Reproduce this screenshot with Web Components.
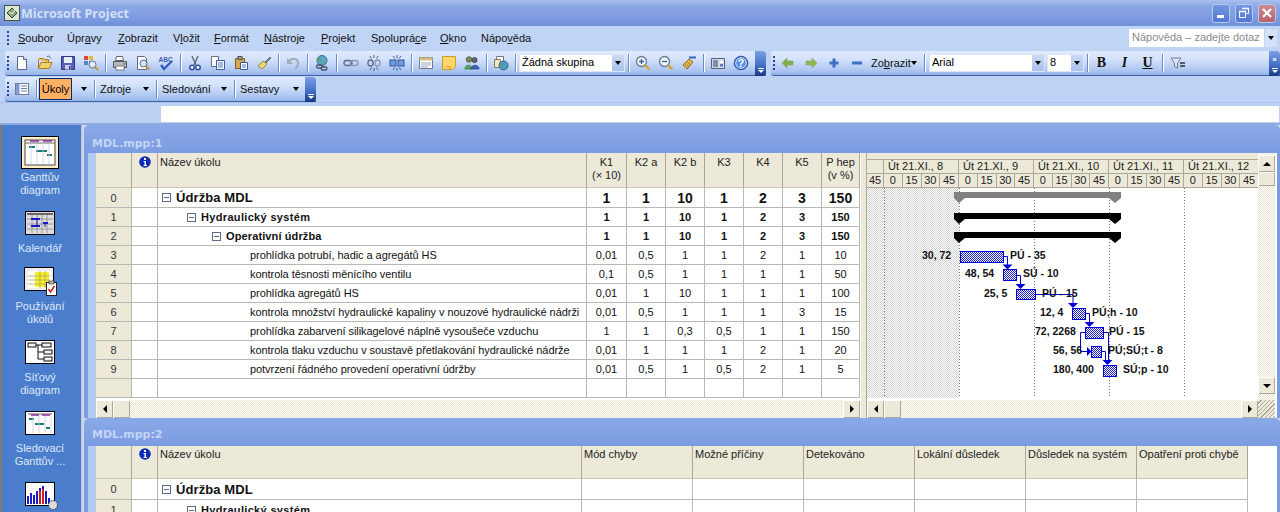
<!doctype html>
<html lang="cs">
<head>
<meta charset="utf-8">
<title>Microsoft Project</title>
<style>
  html, body { margin: 0; height: 100%; overflow: hidden; background: #c0d5f6; }
  body { font: 11px "Liberation Sans", Arial, sans-serif; color: #000; }
  ms-app { width: 1280px; height: 512px; }
</style>
</head>
<body>
<ms-app></ms-app>
<script>
(function () {
  const DITHER_BLUE = `<pattern id="d" width="2" height="2" patternUnits="userSpaceOnUse"><rect width="2" height="2" fill="#fff"/><rect width="1" height="1" fill="#1a1ad0"/><rect x="1" y="1" width="1" height="1" fill="#1a1ad0"/></pattern>`;

  const ICONS = {
    new: `<path d="M3.5 1.5h6l3 3v10h-9z" fill="#fff" stroke="#59688a"/><path d="M9.5 1.5v3h3" fill="#dfe6f2" stroke="#59688a"/>`,
    open: `<path d="M1.5 4.5v9h11l2.500-6h-11l-2 5" fill="#f2cf6d" stroke="#a97f22"/><path d="M1.500 4.500l1-1h4l1 1h4v3" fill="#e8b84a" stroke="#a97f22"/><path d="M10 1.500c2-1 3 0 4 2" fill="none" stroke="#3a62b5"/>`,
    save: `<path d="M1.500 1.500h13v13h-13z" fill="#5560bb" stroke="#2e3580"/><rect x="4" y="2" width="8" height="6" fill="#e9edf8"/><rect x="5" y="10" width="6" height="4.500" fill="#c8cde0"/><rect x="9" y="11" width="1.500" height="3" fill="#2e3580"/>`,
    perm: `<rect x="1" y="1" width="4" height="4" fill="#d84c3c"/><rect x="6" y="1" width="4" height="4" fill="#e2b73a"/><rect x="1" y="6" width="4" height="4" fill="#4a8ad0"/><rect x="6" y="6" width="4" height="4" fill="#5aa85a"/><circle cx="9.500" cy="9.500" r="3.500" fill="#dfeefa" stroke="#66708a"/><path d="M12 12l3 3" stroke="#c9952f" stroke-width="2"/>`,
    print: `<path d="M4.500 1.500h6l1 4h-8z" fill="#fff" stroke="#666"/><path d="M1.500 6.500h13v6h-13z" fill="#b7bcc4" stroke="#555"/><rect x="4" y="11" width="8" height="4" fill="#fff" stroke="#666" stroke-width=".8"/><rect x="11" y="8" width="2.500" height="1.500" fill="#3fae4e"/>`,
    preview: `<path d="M2.500 1.500h7l2 2v11h-9z" fill="#fff" stroke="#59688a"/><circle cx="8.500" cy="8.500" r="3.500" fill="#cfe5f6" stroke="#5b6a88"/><path d="M11 11l3.500 3.500" stroke="#c9952f" stroke-width="2"/>`,
    spell: `<text x="0.500" y="6.500" font-family="Liberation Sans" font-size="6.500" font-weight="700" fill="#3c5ea8">ABC</text><path d="M3 10l3 4 8-8" fill="none" stroke="#2d5fbd" stroke-width="2.400"/>`,
    cut: `<path d="M5 1l4 9M11 1l-4 9" stroke="#5a6470" stroke-width="1.300"/><circle cx="5" cy="12.500" r="2.200" fill="#fff" stroke="#2d4f9e" stroke-width="1.500"/><circle cx="11" cy="12.500" r="2.200" fill="#fff" stroke="#2d4f9e" stroke-width="1.500"/>`,
    copy: `<path d="M1.500 1.500h7v10h-7z" fill="#fff" stroke="#63708f"/><path d="M6.500 5.500h8v9h-8z" fill="#f5f8fe" stroke="#3c5ea8"/><path d="M8 8h5M8 10h5M8 12h5" stroke="#5a7cc0"/>`,
    paste: `<path d="M2.500 3.500h9v10h-9z" fill="#d5a84c" stroke="#80601e"/><rect x="5" y="1.500" width="4" height="3" fill="#9aa3b3" stroke="#555"/><path d="M7.500 7.500h7v7h-7z" fill="#fff" stroke="#3c5ea8"/><path d="M9 10h4M9 12h4" stroke="#5a7cc0"/>`,
    brush: `<path d="M9 7l5-5 1 1-5 5z" fill="#6d7890" stroke="#4b5468" stroke-width=".6"/><path d="M2 11l5-5 4 3-5 5z" fill="#ecd27b" stroke="#a58a3a"/>`,
    undo: `<path d="M4 6c3-3 8-3 9 1 .6 3-1 5-3 7" fill="none" stroke="#a4abba" stroke-width="2"/><path d="M2 3v6h6z" fill="#a4abba"/>`,
    globe: `<circle cx="8" cy="5.500" r="5" fill="#5aa6d0" stroke="#3a6a9a"/><path d="M5 2c2 1 3 2 2 4-2 1-3 0-4-1M9 6c2 0 3 1 2 2l-2 1z" fill="#5da35a"/><rect x="2.500" y="10" width="6" height="3" rx="1.500" fill="none" stroke="#4b5468" stroke-width="1.300"/><rect x="7" y="12" width="6" height="3" rx="1.500" fill="none" stroke="#4b5468" stroke-width="1.300"/>`,
    link: `<rect x="1" y="5.500" width="8" height="5" rx="2.500" fill="none" stroke="#5a6a8a" stroke-width="1.400"/><rect x="7" y="5.500" width="8" height="5" rx="2.500" fill="none" stroke="#8a97ad" stroke-width="1.400"/>`,
    unlink: `<rect x="2" y="5" width="5" height="6" rx="2.500" fill="none" stroke="#5a6a8a" stroke-width="1.300"/><rect x="9" y="5" width="5" height="6" rx="2.500" fill="none" stroke="#8a97ad" stroke-width="1.300"/><path d="M8 0v3M8 13v3M4 1l1.500 2.500M12 1l-1.500 2.500M4 15l1.500-2.500M12 15l-1.500-2.500" stroke="#4b5468" stroke-width=".9"/>`,
    split: `<rect x="1" y="5" width="6" height="6" fill="#6f9fe0" stroke="#2d4f9e"/><rect x="9" y="5" width="6" height="6" fill="#6f9fe0" stroke="#2d4f9e"/><path d="M8 0v3M8 13v3M4 1l2 2.500M12 1l-2 2.500M4 15l2-2.500M12 15l-2-2.500" stroke="#2d4f9e" stroke-width=".9"/>`,
    notes: `<path d="M1.500 2.500h13v11h-13z" fill="#fff" stroke="#6a7890"/><path d="M1.500 2.500h13v3h-13z" fill="#d8c080"/><path d="M3 8h10M3 10h10M3 12h7" stroke="#9aa6ba"/>`,
    note: `<path d="M1.500 1.500h13v10l-3 3h-10z" fill="#fbd669" stroke="#c99c2f"/><path d="M1.500 11h9v3.500" fill="#f1a93c" opacity=".7"/>`,
    res: `<circle cx="5" cy="4.500" r="2.800" fill="#7a8a5a" stroke="#3d4a30" stroke-width=".7"/><circle cx="10.500" cy="5" r="2.600" fill="#5e6672" stroke="#333" stroke-width=".7"/><path d="M1 14c0-5 7-5 7 0z" fill="#5aa85a" stroke="#2f6e33" stroke-width=".7"/><path d="M7 14c0-5 8-5 8 0z" fill="#3a62c0" stroke="#24407e" stroke-width=".7"/>`,
    assign: `<path d="M3.500 1.500h7v9h-7z" fill="#fff" stroke="#6a7890"/><path d="M1.500 4.500h6v8h-6z" fill="#f3e5c0" stroke="#8a7a50"/><circle cx="10.500" cy="10.500" r="4.500" fill="#4f9ac8" stroke="#2d6690"/><path d="M8 8c2 0 3 1 2 3l-2 0zM12 12l2-1-1 3z" fill="#4ea24f"/>`,
    zoomin: `<circle cx="6.500" cy="6.500" r="5" fill="#eef5fc" stroke="#6a7890" stroke-width="1.300"/><path d="M4 6.500h5M6.500 4v5" stroke="#3c5ea8" stroke-width="1.300"/><path d="M10 10l4.500 4.500" stroke="#d2a53a" stroke-width="2.400"/>`,
    zoomout: `<circle cx="6.500" cy="6.500" r="5" fill="#eef5fc" stroke="#6a7890" stroke-width="1.300"/><path d="M4 6.500h5" stroke="#3c5ea8" stroke-width="1.300"/><path d="M10 10l4.500 4.500" stroke="#d2a53a" stroke-width="2.400"/>`,
    goto: `<path d="M8 2.500h7" stroke="#3a62c0" stroke-width="2"/><path d="M2 10l6-6 4 3-6 7z" fill="#e2b951" stroke="#8f6e22"/><path d="M4 9l4 3M6 7l4 3" stroke="#8f6e22" stroke-width=".7"/>`,
    photo: `<path d="M1.500 3.500h13v10h-13z" fill="#d5dbe6" stroke="#55617a"/><rect x="3" y="5" width="5" height="7" fill="#7f8ca8"/><rect x="10" y="6" width="3" height="2" fill="#fff"/><rect x="10" y="9" width="3" height="2.500" fill="#5a7cc0"/>`,
    help: `<circle cx="8" cy="8" r="6.800" fill="#3f74d2" stroke="#2d4f9e"/><circle cx="8" cy="8" r="5.300" fill="#5a8fe4" stroke="#dfe9fb"/><text x="8" y="11.800" text-anchor="middle" font-family="Liberation Sans" font-size="10.500" font-weight="700" fill="#fff">?</text>`,
    back: `<path d="M2 8l5-5v3h6v4H7v3z" fill="#7fb04c" stroke="#8f9f6a" stroke-width=".6"/>`,
    fwd: `<path d="M14 8L9 3v3H3v4h6v3z" fill="#8cbb52" stroke="#8f9f6a" stroke-width=".6"/>`,
    plus: `<path d="M6.500 3.500h3v3h3v3h-3v3h-3v-3h-3v-3h3z" fill="#3d6fc9"/>`,
    minus: `<rect x="3" y="6.500" width="10" height="3" fill="#3d6fc9"/>`,
    filter: `<path d="M1 3h10L7.500 8v5l-3-1.500V8z" fill="#dfe5ee" stroke="#717d92"/><path d="M10 8h5M10 11h5" stroke="#333" stroke-width="1.600"/>`,
    list: `<rect x="1.500" y="2.500" width="13" height="11" fill="#fff" stroke="#6a7b9c"/><rect x="2" y="3" width="3.500" height="10" fill="#7f9cd4"/><path d="M7 5h6M7 7.500h6M7 10h6" stroke="#6a7b9c"/>`,
    appicon: `<rect x=".5" y=".5" width="15" height="15" fill="#dfe6d8" stroke="#3e5a44"/><path d="M3 8l5-5 5 5-5 5z" fill="#8aa874" stroke="#2f4a30"/><path d="M5 7l3 2 3-4" stroke="#fff" fill="none"/>`
  };

  const BIG = {
    gantt: `<rect x=".5" y=".5" width="37" height="32" fill="#ffefc4" stroke="#000"/><rect x="4" y="4" width="30" height="25" fill="#fff" stroke="#445"/><path d="M4 7h30" stroke="#666"/><path d="M9 5h9M22 5h9" stroke="#8a2a9a" stroke-width="1.500"/><path d="M8 11h6M15 15h11M26 19h5" stroke="#197a78" stroke-width="2"/><path d="M10 8v20M16 8v20M22 8v20M28 8v20" stroke="#ccd" stroke-width=".8"/>`,
    calendar: `<rect x=".5" y=".5" width="29" height="23" fill="#dcdcdc" stroke="#000"/><path d="M2 3h26" stroke="#666" stroke-width="2"/><path d="M7 4v18M12 4v18M17 4v18M22 4v18M2 8h26M2 13h26M2 18h26" stroke="#8a8a8a" stroke-width=".8"/><path d="M6 8h9M6 15h9M18 12h5" stroke="#1a1ac8" stroke-width="2"/><path d="M12 9v6M20 12v4" stroke="#1a1ac8"/>`,
    usage: `<rect x=".5" y=".5" width="29" height="23" fill="#eee" stroke="#000"/><rect x="4" y="4" width="23" height="17" fill="#fff"/><rect x="11" y="5" width="14" height="15" fill="#f4f02c"/><path d="M11 9h15M11 13h15M11 17h15M16 4v17M21 4v17M4 9h7M4 13h7M4 17h7" stroke="#b5a25a" stroke-width=".8"/><rect x="22.500" y="15.500" width="10" height="13" fill="#fff" stroke="#222"/><rect x="25" y="14" width="5" height="3" fill="#bbb" stroke="#222" stroke-width=".6"/><path d="M24.500 22l2 3 4-6" fill="none" stroke="#c02020" stroke-width="1.500"/>`,
    network: `<rect x=".5" y=".5" width="29" height="23" fill="#fff" stroke="#000"/><g fill="#f2f2f2" stroke="#111"><rect x="3" y="3" width="8" height="4"/><rect x="17" y="3" width="9" height="4"/><rect x="19" y="10" width="8" height="4"/><rect x="19" y="17" width="8" height="4"/></g><path d="M11 5h6M13 5v14h6M13 12h6" fill="none" stroke="#111"/>`,
    tracking: `<rect x=".5" y=".5" width="29" height="23" fill="#fff" stroke="#000"/><path d="M3 3h24" stroke="#666"/><path d="M6 4h8M17 4h8" stroke="#8a2a9a" stroke-width="1.500"/><path d="M4 8h5M10 13h9M21 17h4" stroke="#197a78" stroke-width="2"/><path d="M8 5v17M14 5v17M20 5v17M26 5v17" stroke="#ccd" stroke-width=".8"/>`,
    chart: `<rect x=".5" y=".5" width="29" height="23" fill="#fff" stroke="#000"/><path d="M3 22v-8M6 22v-11M9 22v-9M12 22v-13M15 22V6M18 22V4M21 22V9M24 22v-6M27 22v-3" stroke-width="2" stroke="#1a1ac8"/><path d="M15 22V9M18 22V7" stroke="#d02020" stroke-width="2"/><circle cx="28" cy="23" r="4.500" fill="#ddd" stroke="#333" stroke-dasharray="2 1"/>`
  };

  function define(name, css, render) {
    customElements.define(name, class extends HTMLElement {
      connectedCallback() {
        if (this.shadowRoot) return;
        this.attachShadow({ mode: "open" }).innerHTML = `<style>${css}</style>${render(this)}`;
      }
    });
  }

  const GRIP = `background: repeating-linear-gradient(#23478f 0 2px, transparent 2px 4px);`;
  const ARROW = `border-left: 3.5px solid transparent; border-right: 3.5px solid transparent; border-top: 4px solid #000;`;
  const BEVEL = `background: #ece9d8; box-shadow: inset 1px 1px 0 #fff, inset -1px -1px 0 #aca899; box-sizing: border-box;`;
  const DITHER = `background: repeating-conic-gradient(#ebe7d6 0 25%, #fdfdf8 0 50%) 0 0 / 2px 2px;`;

  define("ms-titlebar", `
    :host { display: flex; align-items: center; height: 26px; box-sizing: border-box; padding: 0 4px;
      background: linear-gradient(#a9c0ef 0, #8aa6e4 25%, #7d9be0 70%, #6f90d8 100%); }
    svg { width: 16px; height: 16px; }
    span { margin-left: 1px; font: 700 12.5px "Open Sans", sans-serif; color: #d4e0f8; flex: 1; letter-spacing: .05px; }
    i { width: 18px; height: 19px; margin-left: 5px; border-radius: 3px; background: linear-gradient(#7497e2, #4f78d4);
        border: 1px solid #b9caef; box-sizing: border-box; display: flex; align-items: center; justify-content: center; }
    i.close { background: linear-gradient(#cc8a92, #b9636e); }
    i svg { width: 12px; height: 12px; }
  `, () => `<svg viewBox="0 0 16 16">${ICONS.appicon}</svg><span>Microsoft Project</span>
    <i><svg viewBox="0 0 12 12"><rect x="2" y="8" width="7" height="3" fill="#fff"/></svg></i>
    <i><svg viewBox="0 0 12 12"><path d="M4.500 1.500h6v5h-2M1.500 4.500h6v6h-6z" fill="none" stroke="#fff"/><path d="M4 1.500h7M1 4.500h7" stroke="#fff" stroke-width="1.500"/></svg></i>
    <i class="close"><svg viewBox="0 0 12 12"><path d="M2 2l8 8M10 2l-8 8" stroke="#fff" stroke-width="2.200"/></svg></i>`);

  define("ms-menubar", `
    :host { display: flex; align-items: center; height: 24px; box-sizing: border-box; padding: 0 3px 0 7px; background: #c0d5f6; }
    .grip { width: 2px; height: 14px; margin-right: 9px; ${GRIP} }
    .items { display: flex; flex: 1; }
    ::slotted(*) { display: block; }
    .ask { display: flex; width: 148px; height: 18px; margin-top: 0; }
    .ask span { flex: 1; background: #fff; color: #8b8b8b; padding: 0 0 0 3px; font: 11px/17px "Liberation Sans", sans-serif; }
    .ask b { width: 12px; margin-left: 1px; background: #d4e1f8; display: flex; align-items: center; justify-content: center; }
    .ask b::after { content: ""; ${ARROW} }
  `, () => `<div class="grip"></div><div class="items"><slot></slot></div><div class="ask"><span>Nápověda – zadejte dotaz</span><b></b></div>`);

  define("menu-item", `:host { display: block; font-size: 11px; line-height: 15px; color: #111; white-space: nowrap; }
    ::slotted(u) { text-decoration: underline; }`,
    el => `<div style="width:${el.getAttribute("w")}px"><slot></slot></div>`);

  define("ms-toolbar", `
    :host { display: flex; align-items: center; height: 25px; box-sizing: border-box; border-radius: 3px 0 0 3px; padding-left: 2px;
      border-bottom: 1px solid #3c61a4; background: linear-gradient(#e0ebfd 0, #d3e1fa 35%, #a9c3f0 85%, #94b2e8 100%); position: relative; }
    .grip { width: 2px; height: 14px; margin-right: 1px; ${GRIP} }
  `, () => `<div class="grip"></div><slot></slot>`);

  define("tb-btn", `:host { display: flex; width: 23px; height: 22px; align-items: center; justify-content: center; flex: none; }
    svg { width: 16px; height: 16px; display: block; }`,
    el => `<svg viewBox="0 0 16 16">${ICONS[el.getAttribute("icon")]}</svg>`);

  define("tb-sep", `:host { display: flex; justify-content: center; width: 6px; height: 18px; flex: none; }
    div { width: 1px; background: #6d8cc6; box-shadow: 1px 0 0 #fff; }`, () => `<div></div>`);

  define("tb-combo", `
    :host { display: flex; height: 18px; flex: none; background: #fff; box-sizing: border-box; border: 1px solid #dbe6fa; }
    span { flex: 1; padding-left: 2px; font-size: 11px; line-height: 15px; white-space: nowrap; overflow: hidden; }
    b { width: 12px; background: linear-gradient(#c9d9f5, #a9c1ea); display: flex; align-items: center; justify-content: center; }
    b::after { content: ""; ${ARROW} }
  `, el => `<span><slot></slot></span><b></b>`);

  define("tb-menu", `
    :host { display: flex; align-items: center; height: 22px; box-sizing: border-box; padding-left: 3px; flex: none; font-size: 11px; white-space: nowrap; color: #111; }
    span { flex: 1; }
    i { ${ARROW} margin-right: var(--arrow-gap, 4px); }
  `, () => `<span><slot></slot></span><i></i>`);

  define("tb-style", `:host { display: flex; width: 23px; justify-content: center; flex: none; font: 700 14px "Liberation Serif", serif; color: #111; }`, () => `<slot></slot>`);

  define("tb-active", `:host { display: flex; align-items: center; justify-content: center; flex: none; width: 33px; height: 22px; box-sizing: border-box;
      border: 1px solid #0a2a70; background: #ffb163; font-size: 11px; }`, () => `<slot></slot>`);

  define("tb-chevron", `
    :host { display: flex; flex-direction: column; align-items: center; justify-content: flex-end; gap: 1px; width: 11px; height: 25px; flex: none; box-sizing: border-box; padding-bottom: 3px;
      background: linear-gradient(#7c9fe4 0, #4571c8 55%, #17387f 100%); border-radius: 0 3px 3px 0; margin-bottom: -1px; }
    .more { font: 700 8px/5px "Liberation Sans", sans-serif; color: #fff; }
    i { width: 6px; height: 1px; background: #fff; }
    u { border-left: 3px solid transparent; border-right: 3px solid transparent; border-top: 3px solid #fff; }
  `, el => `${el.hasAttribute("more") ? `<div class="more" style="margin-bottom:5px">»</div>` : ""}<i></i><u></u>`);

  define("ms-entrybar", `
    :host { display: block; height: 23px; box-sizing: border-box; padding: 3px 1px 3px 161px; background: #bcd1f4;
      border-top: 1px solid #aac1ec; border-bottom: 2px solid #90a9dd; }
    div { height: 16px; background: #fff; }
  `, () => `<div></div>`);

  define("side-bar", `
    :host { display: flex; flex-direction: column; gap: 9px; width: 82px; box-sizing: border-box; padding: 10px 0 0 0; flex: none; overflow: hidden;
      background: #4a7dcc; border-left: 2px solid #7b7b78; border-right: 1px solid #bcc6da; }
  `, () => `<slot></slot>`);

  define("side-item", `
    :host { display: block; text-align: center; width: 76px; flex: none; font: 11px/13px "Liberation Sans", sans-serif; color: #dde8fa; }
    .ico { height: 34px; display: flex; align-items: center; justify-content: center; margin-bottom: 2px; }
    svg { display: block; overflow: visible; }
  `, el => {
    const w = +el.getAttribute("w"), h = +el.getAttribute("h");
    return `<div class="ico"><svg width="${w}" height="${h}" viewBox="0 0 ${w} ${h}">${BIG[el.getAttribute("icon")]}</svg></div><slot></slot>`;
  });

  define("mp-window", `
    :host { display: flex; flex-direction: column; flex: none; box-sizing: border-box; padding: 0 3px 0 4px; overflow: hidden;
      border-radius: 5px 5px 0 0; background: linear-gradient(#8aa9e8 0, #7c9ce2 28px, #7c9ce2 100%); }
    header { flex: none; box-sizing: border-box; padding-left: 4px; font: 700 11px/1 "DejaVu Sans", sans-serif; color: #c4d5f6; display: flex; align-items: center; }
    main { flex: 1; min-height: 0; display: flex; background: #fff; }
    .strip { width: 8px; flex: none; background: #b6c9ef; }
    .body { flex: 1; min-width: 0; display: flex; flex-direction: column; }
  `, el => `<header style="height:${el.getAttribute("head")}px;padding-top:${el.getAttribute("pad")}px">${el.getAttribute("name")}</header><main><div class="strip"></div><div class="body"><slot></slot></div></main>`);

  define("win-split", `
    :host { display: flex; height: 100%; }
    .left { width: 764px; flex: none; display: flex; flex-direction: column; }
    .bar { width: 7px; flex: none; background: #ece9d8; box-shadow: inset 1px 0 0 #fff, inset -1px 0 0 #aca899; }
    .right { width: 408px; flex: none; display: flex; flex-direction: column; }
  `, () => `<div class="left"><slot name="left"></slot></div><div class="bar"></div><div class="right"><slot name="right"></slot></div>`);

  define("task-table", `
    :host { display: block; overflow: hidden; flex: 1; background: #fff; font: 11px "Liberation Sans", sans-serif; }
    .g { display: grid; }
    .g > div { box-sizing: border-box; border-right: 1px solid #b8b8b4; border-bottom: 1px solid #b8b8b4; display: flex; align-items: center; justify-content: center; white-space: nowrap; overflow: hidden; color: #111; }
    .hd, .id { background: #ece9d8; }
    .hd { align-items: flex-start !important; text-align: center; line-height: 13px; border-color: #c9c5b2 !important; border-right-color: #aca899 !important; color: #222 !important; }
    .hd.left { justify-content: flex-start !important; padding-left: 2px; text-align: left; }
    .id { color: #333 !important; }
    .name { justify-content: flex-start !important; }
    .name.l0 { font-size: 13px; letter-spacing: .1px; }
    .name.l1 { letter-spacing: .33px; }
    .name.l2 { letter-spacing: .12px; }
    .name.l3 { letter-spacing: -.06px; }
    .l0 { font-weight: 700; font-size: 14px; }
    .l1, .l2 { font-weight: 700; }
    .box { width: 9px; height: 9px; border: 1px solid #5a6d8c; box-sizing: border-box; margin-right: 5px; background: linear-gradient(#5a6d8c,#5a6d8c) center / 5px 1px no-repeat #fff; flex: none; }
    svg { display: block; }
  `, el => {
    const data = JSON.parse(el.getAttribute("data"));
    const info = `<svg width="12" height="12" viewBox="0 0 12 12"><circle cx="6" cy="6" r="5.800" fill="#0a2ab8"/><rect x="5" y="2" width="2" height="2" fill="#fff"/><path d="M4.500 5h2.500v4h1v1H4.500V9h1V6h-1z" fill="#fff"/></svg>`;
    const pt = `padding-top:${data.hpad}px`;
    let html = `<div class="hd" style="${pt}"></div><div class="hd" style="${pt}">${info}</div>`;
    data.heads.forEach((h, i) => {
      html += `<div class="hd ${data.leftHeads ? "left" : i === 0 ? "left" : ""}" style="${pt}">${h}</div>`;
    });
    data.rows.forEach((r, n) => {
      const indent = r.level < 3 ? 4 + r.level * 25 : 92;
      const cl = `l${r.level}`;
      html += `<div class="id">${r.empty ? "" : n}</div><div class="info"></div>`;
      html += `<div class="name ${cl}" style="padding-left:${indent}px">${r.level < 3 && !r.empty ? `<span class="box"></span>` : ""}${r.name || ""}</div>`;
      r.vals.forEach(v => { html += `<div class="${cl}">${v}</div>`; });
    });
    return `<div class="g" style="grid-template-columns:${data.cols};grid-template-rows:${data.head}px ${data.rowHeights}">${html}</div>`;
  });

  define("h-scroll", `
    :host { display: flex; height: 18px; flex: none; ${DITHER} }
    .b { width: 17px; flex: none; display: flex; align-items: center; justify-content: center; ${BEVEL} }
    .g { flex: 1; }
    .l::after { content: ""; border-top: 4px solid transparent; border-bottom: 4px solid transparent; border-right: 4px solid #000; }
    .r::after { content: ""; border-top: 4px solid transparent; border-bottom: 4px solid transparent; border-left: 4px solid #000; }
    .grip { width: 17px; flex: none; background: repeating-linear-gradient(135deg, #ece9d8 0 2px, #aca899 2px 3px); }
  `, el => `<div class="b l"></div><div class="b"></div><div class="g"></div><div class="b r"></div>${el.hasAttribute("grip") ? `<div class="grip"></div>` : ""}`);

  define("v-scroll", `
    :host { display: flex; flex-direction: column; width: 17px; flex: none; ${DITHER} padding-top: 2px; padding-bottom: 6px; box-sizing: border-box; }
    .b { height: 17px; flex: none; display: flex; align-items: center; justify-content: center; ${BEVEL} }
    .t { height: 14px; flex: none; ${BEVEL} }
    .g { flex: 1; }
    .u::after { content: ""; border-left: 4px solid transparent; border-right: 4px solid transparent; border-bottom: 4px solid #000; }
    .d::after { content: ""; border-left: 4px solid transparent; border-right: 4px solid transparent; border-top: 4px solid #000; }
  `, () => `<div class="b u"></div><div class="t"></div><div class="g"></div><div class="b d"></div>`);

  define("time-scale", `
    :host { display: block; height: 35px; box-sizing: border-box; padding-top: 6px; background: #ece9d8; font: 11px "Liberation Sans", sans-serif; color: #222; overflow: hidden; border-bottom: 1px solid #aca899; }
    .r { display: flex; height: 14px; border-top: 1px solid #aca899; box-sizing: border-box; }
    .r div { flex: none; box-sizing: border-box; border-right: 1px solid #aca899; line-height: 13px; white-space: nowrap; }
    .top div { padding-left: 4px; }
    .bot div { text-align: center; }
  `, () => {
    const hours = [8, 9, 10, 11, 12];
    const top = hours.map(h => `<div style="width:75px">Út 21.XI., ${h}</div>`).join("");
    let bot = `<div style="width:17px">45</div>`;
    hours.forEach(() => [0, 15, 30, 45].forEach(m => { bot += `<div style="width:18.75px">${m}</div>`; }));
    return `<div class="r top"><div style="width:17px;padding:0"></div>${top}</div><div class="r bot">${bot}</div>`;
  });

  define("gantt-chart", `
    :host { display: block; flex: 1; min-height: 0; overflow: hidden; background: #fff; }
    svg { display: block; }
    text { font: 700 10.5px "Liberation Sans", sans-serif; fill: #111; }
  `, () => {
    const summary = (y, color) => `<path d="M954 ${y}h167v6l-6 5-6-5H965l-6 5-5-5z" fill="${color}"/>`;
    const tasks = [
      [960, 251, 43, 11, "30, 72", 922, "PÚ - 35", 1010],
      [1003, 269, 13, 11, "48, 54", 965, "SÚ - 10", 1023],
      [1016, 289, 19, 10, "25, 5", 984, "PÚ - 15", 1042],
      [1072, 308, 13, 11, "12, 4", 1040, "PÚ;h - 10", 1092],
      [1085, 327, 18, 11, "72, 2268", 1035, "PÚ - 15", 1109],
      [1091, 346, 10, 11, "56, 56", 1053, "PÚ;SÚ;t - 8", 1108],
      [1103, 365, 13, 11, "180, 400", 1053, "SÚ;p - 10", 1123]
    ];
    const bars = tasks.map(t => `<rect x="${t[0] + .5}" y="${t[1] + .5}" width="${t[2]}" height="${t[3]}" fill="url(#d)" stroke="#0000d8"/>`).join("");
    const labels = tasks.map(t => `<text x="${t[5]}" y="${t[1] + 8}">${t[4]}</text><text x="${t[7]}" y="${t[1] + 8}">${t[6]}</text>`).join("");
    const links = [
      "M1003 256.500h4.500V266", "M1016 275.500h4.500V285", "M1035 294.500h38V304", "M1085 313.500h4.500V323",
      "M1085 332.500h-4.500v19h7", "M1103 332.500h5.500V361", "M1101 351.500h4.500V361"
    ].map(d => `<path d="${d}" fill="none" stroke="#0000d8"/>`).join("");
    const heads = [[1007.5, 269.5], [1020.5, 289], [1073, 308], [1089.5, 327], [1107.5, 365]]
      .map(a => `<path d="M${a[0] - 5} ${a[1] - 5}h10l-5 5z" fill="#0000d8"/>`).join("");
    const vlines = [884, 959, 1034, 1109, 1184].map(x => `<path d="M${x + .5} 188v210" stroke="#777" stroke-dasharray="1 2"/>`).join("");
    return `<svg width="391" height="210" viewBox="867 188 391 210">
      <defs>${DITHER_BLUE}<pattern id="n" width="2" height="2" patternUnits="userSpaceOnUse"><rect width="2" height="2" fill="#fff"/><rect width="1" height="1" fill="#d2d2d2"/><rect x="1" y="1" width="1" height="1" fill="#d2d2d2"/></pattern></defs>
      <rect x="867" y="188" width="92" height="210" fill="url(#n)"/>${vlines}
      ${summary(192, "#808080")}${summary(213, "#000")}${summary(232, "#000")}
      ${bars}${links}${heads}
      <path d="M1087 347l4.500 4.500-4.500 4.500z" fill="#0000d8"/>
      ${labels}</svg>`;
  });

  define("gantt-pane", `
    :host { display: flex; flex: 1; min-height: 0; }
    .c { width: 391px; flex: none; display: flex; flex-direction: column; }
    .pad { flex: 1; background: #fff; }
  `, () => `<div class="c"><time-scale></time-scale><gantt-chart></gantt-chart></div><v-scroll></v-scroll><div class="pad"></div>`);

  const tools1 = "new open save perm | print preview spell | cut copy paste brush | undo | globe | link unlink split | notes note res | assign".split(" ");
  const btns = list => list.map(n => n === "|" ? "<tb-sep></tb-sep>" : `<tb-btn icon="${n}"></tb-btn>`).join("");

  const K = ["K1<br>(× 10)", "K2 a", "K2 b", "K3", "K4", "K5", "P hep<br>(v %)"];
  const rows1 = [
    { level: 0, name: "Údržba MDL", vals: ["1", "1", "10", "1", "2", "3", "150"] },
    { level: 1, name: "Hydraulický systém", vals: ["1", "1", "10", "1", "2", "3", "150"] },
    { level: 2, name: "Operativní údržba", vals: ["1", "1", "10", "1", "2", "3", "150"] },
    { level: 3, name: "prohlídka potrubí, hadic a agregátů HS", vals: ["0,01", "0,5", "1", "1", "2", "1", "10"] },
    { level: 3, name: "kontrola těsnosti měnícího ventilu", vals: ["0,1", "0,5", "1", "1", "1", "1", "50"] },
    { level: 3, name: "prohlídka agregátů HS", vals: ["0,01", "1", "10", "1", "1", "1", "100"] },
    { level: 3, name: "kontrola množství hydraulické kapaliny v nouzové hydraulické nádrži", vals: ["0,01", "0,5", "1", "1", "1", "3", "15"] },
    { level: 3, name: "prohlídka zabarvení silikagelové náplně vysoušeče vzduchu", vals: ["1", "1", "0,3", "0,5", "1", "1", "150"] },
    { level: 3, name: "kontrola tlaku vzduchu v soustavě přetlakování hydraulické nádrže", vals: ["0,01", "1", "1", "1", "2", "1", "20"] },
    { level: 3, name: "potvrzení řádného provedení operativní údržby", vals: ["0,01", "0,5", "1", "0,5", "2", "1", "5"] },
    { level: 3, empty: true, name: "", vals: ["", "", "", "", "", "", ""] }
  ];
  const table1 = { cols: "36px 26px 429px 40px 39px 39px 39px 39px 39px 38px", head: 35, hpad: 3, rowHeights: "20px repeat(10, 19px)", heads: ["Název úkolu"].concat(K), rows: rows1 };
  const blank = ["", "", "", "", "", ""];
  const table2 = {
    cols: "36px 26px 424px repeat(6, 111px)", head: 33, hpad: 2, rowHeights: "21px 21px", leftHeads: true,
    heads: ["Název úkolu", "Mód chyby", "Možné příčiny", "Detekováno", "Lokální důsledek", "Důsledek na systém", "Opatření proti chybě"],
    rows: [
      { level: 0, name: "Údržba MDL", vals: blank },
      { level: 1, name: "Hydraulický systém", vals: blank }
    ]
  };
  const attr = o => JSON.stringify(o).replace(/&/g, "&amp;").replace(/"/g, "&quot;");

  const MENU = [["<u>S</u>oubor", 49], ["Úpr<u>a</u>vy", 51], ["<u>Z</u>obrazit", 55], ["V<u>l</u>ožit", 41], ["<u>F</u>ormát", 50], ["<u>N</u>ástroje", 57], ["<u>P</u>rojekt", 50], ["Spoluprá<u>c</u>e", 69], ["<u>O</u>kno", 41], ["Nápo<u>v</u>ěda", 60]];

  define("ms-app", `
    :host { display: flex; flex-direction: column; overflow: hidden; }
    .row { display: flex; height: 26px; background: #bdd2f5; box-sizing: border-box; flex: none; padding-top: 1px; }
    .content { flex: 1; min-height: 0; display: flex; background: #cfd6e6; }
    .main { width: 1196px; margin-left: 2px; flex: none; display: flex; flex-direction: column; }
    .spacer { flex: 1; }
  `, () => `
    <ms-titlebar></ms-titlebar>
    <ms-menubar>${MENU.map(m => `<menu-item w="${m[1]}">${m[0]}</menu-item>`).join("")}</ms-menubar>
    <div class="row" style="padding-left:5px">
      <ms-toolbar style="width:761px">
        ${btns(tools1)}<tb-sep style="margin-right:1px"></tb-sep>
        <tb-combo style="width:106px">Žádná skupina</tb-combo><tb-sep style="width:5px;margin-left:1px"></tb-sep>
        ${btns("zoomin zoomout goto | photo help".split(" "))}<div class="spacer"></div><tb-chevron></tb-chevron>
      </ms-toolbar>
      <ms-toolbar style="width:509px;margin-left:5px;border-radius:3px 0 0 3px">
        ${btns("back fwd plus minus".split(" "))}
        <tb-menu style="width:50px;--arrow-gap:5px">Zo<u>b</u>razit</tb-menu><tb-sep style="margin-left:3px;margin-right:2px"></tb-sep>
        <tb-combo style="width:116px">Arial</tb-combo><tb-combo style="width:37px;margin-left:2px">8</tb-combo>
        <tb-sep></tb-sep>
        <tb-style>B</tb-style><tb-style style="font-style:italic">I</tb-style><tb-style style="text-decoration:underline">U</tb-style>
        <tb-sep></tb-sep><tb-btn icon="filter" style="margin-left:1px"></tb-btn><div class="spacer"></div><tb-chevron more></tb-chevron>
      </ms-toolbar>
    </div>
    <div class="row" style="padding-left:5px">
      <ms-toolbar style="width:311px">
        <tb-btn icon="list"></tb-btn><tb-sep></tb-sep>
        <tb-active>Úkoly</tb-active><tb-menu style="width:19px;padding-left:8px"></tb-menu><tb-sep></tb-sep>
        <tb-menu style="width:56px">Zdroje</tb-menu><tb-sep></tb-sep>
        <tb-menu style="width:72px">Sledování</tb-menu><tb-sep></tb-sep>
        <tb-menu style="width:68px;--arrow-gap:6px">Sestavy</tb-menu><tb-chevron></tb-chevron>
      </ms-toolbar>
    </div>
    <ms-entrybar></ms-entrybar>
    <div class="content">
      <side-bar>
        <side-item icon="gantt" w="38" h="33">Ganttův<br>diagram</side-item>
        <side-item icon="calendar" w="30" h="24">Kalendář</side-item>
        <side-item icon="usage" w="33" h="29">Používání<br>úkolů</side-item>
        <side-item icon="network" w="30" h="24">Síťový<br>diagram</side-item>
        <side-item icon="tracking" w="30" h="24">Sledovací<br>Ganttův ...</side-item>
        <side-item icon="chart" w="30" h="24"></side-item>
      </side-bar>
      <div class="main">
        <mp-window name="MDL.mpp:1" head="28" pad="8" style="height:293px">
          <win-split>
            <task-table slot="left" data="${attr(table1)}"></task-table>
            <h-scroll slot="left"></h-scroll>
            <gantt-pane slot="right"></gantt-pane>
            <h-scroll slot="right" grip></h-scroll>
          </win-split>
        </mp-window>
        <mp-window name="MDL.mpp:2" head="28" pad="4" style="flex:1;min-height:0">
          <task-table data="${attr(table2)}"></task-table>
        </mp-window>
      </div>
    </div>`);
})();
</script>
</body>
</html>
